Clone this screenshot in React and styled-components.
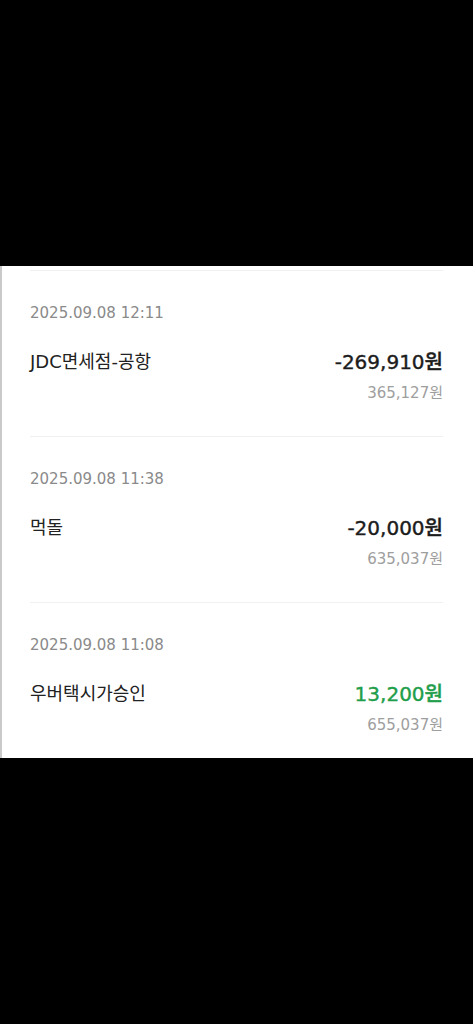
import React from "react";
import styled, { createGlobalStyle } from "styled-components";

const GlobalStyle = createGlobalStyle`
  html, body {
    margin: 0;
    padding: 0;
    background: #000;
  }
  body {
    font-family: "DejaVu Sans", "Noto Sans CJK KR", sans-serif;
  }
`;

const TRANSACTIONS = [
  {
    date: "2025.09.08 12:11",
    title: "JDC면세점-공항",
    amount: "-269,910원",
    balance: "365,127원",
    income: false,
  },
  {
    date: "2025.09.08 11:38",
    title: "먹돌",
    amount: "-20,000원",
    balance: "635,037원",
    income: false,
  },
  {
    date: "2025.09.08 11:08",
    title: "우버택시가승인",
    amount: "13,200원",
    balance: "655,037원",
    income: true,
  },
];

const App = () => (
  <>
    <GlobalStyle />
    <Screen>
      <Panel>
        {TRANSACTIONS.map((tx) => (
          <Item key={tx.date}>
            <DateText>{tx.date}</DateText>
            <MainRow>
              <Title>{tx.title}</Title>
              <Amount $income={tx.income}>{tx.amount}</Amount>
            </MainRow>
            <Balance>{tx.balance}</Balance>
          </Item>
        ))}
      </Panel>
    </Screen>
  </>
);

const Screen = styled.div`
  width: 473px;
  height: 1024px;
  padding-top: 266px;
  box-sizing: border-box;
  background: #000;
`;

const Panel = styled.div`
  background: #fff;
  border-left: 2px solid #c9c9c9;
  height: 492px;
  box-sizing: border-box;
  padding: 4px 30px 0 28px;
`;

const Item = styled.div`
  display: flex;
  flex-direction: column;
  border-top: 1px solid #f0f0f0;
  padding: 32px 0 33px;
`;

const DateText = styled.div`
  font-size: 15px;
  line-height: 20px;
  color: #8a8a8a;
`;

const MainRow = styled.div`
  display: flex;
  justify-content: space-between;
  align-items: center;
  margin-top: 24px;
  height: 26px;
`;

const Title = styled.div`
  font-size: 18px;
  color: #222;
`;

const Amount = styled.div`
  font-size: 20px;
  font-weight: 500;
  -webkit-text-stroke: 0.4px currentColor;
  color: ${(p) => (p.$income ? "#1f9e4b" : "#1c1c1c")};
`;

const Balance = styled.div`
  align-self: flex-end;
  font-size: 15px;
  line-height: 20px;
  margin-top: 10px;
  color: #9e9e9e;
`;

export default App;
